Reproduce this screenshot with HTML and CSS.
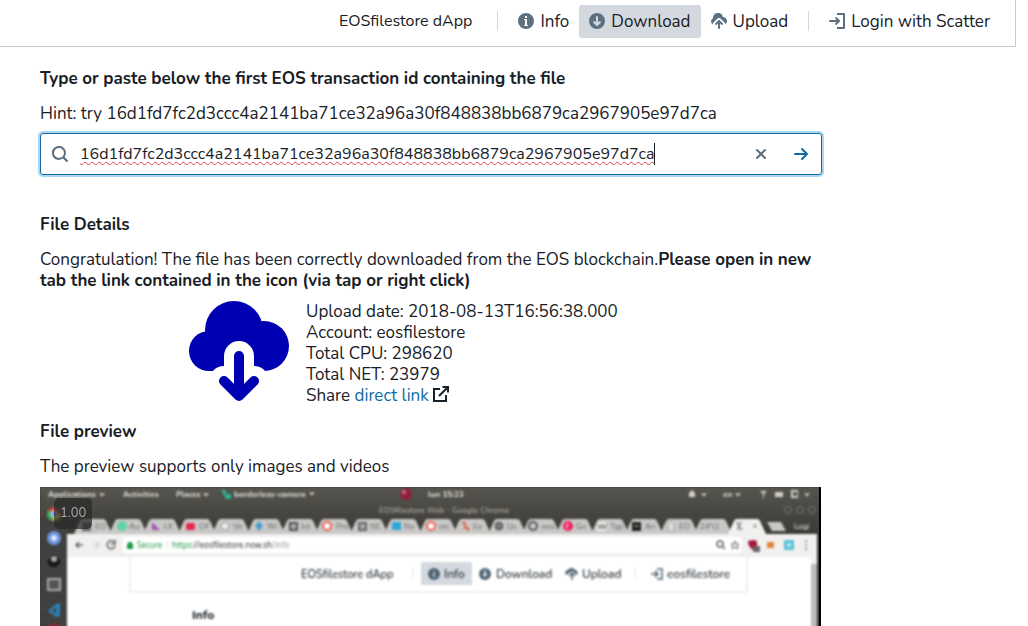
FILE: index.html
```html
<!DOCTYPE html>
<html lang="en">
<head>
    <meta charset="UTF-8">
    <meta name="viewport" content="width=device-width, initial-scale=1.0">
    <title>EOSfilestore Web</title>
    <link rel="stylesheet" href="styles.css">
</head>
<body>
    <header class="navbar">
        <div class="brand">EOSfilestore dApp</div>
        <span class="divider"></span>
        <button type="button" class="nav-button">
            <svg class="icon" viewBox="0 0 16 16"><path fill-rule="evenodd" d="M8 0a8 8 0 1 0 0 16A8 8 0 0 0 8 0zM7 3h2v2H7zM6 6h3v6h1v1H6v-1h1V7H6z"/></svg>
            Info
        </button>
        <button type="button" class="nav-button active">
            <svg class="icon" viewBox="0 0 16 16"><path fill-rule="evenodd" d="M8 0a8 8 0 1 0 0 16A8 8 0 0 0 8 0zM7 4a1 1 0 0 1 2 0v5.600l1.300-1.300a1 1 0 0 1 1.400 1.400l-3 3a1 1 0 0 1-1.400 0l-3-3a1 1 0 0 1 1.400-1.400L7 9.600z"/></svg>
            Download
        </button>
        <button type="button" class="nav-button">
            <svg class="icon" viewBox="0 0 16 16"><path d="M1.600 11.400A3.500 3.500 0 0 1 2 5.300a5 5 0 0 1 9.900-1.300 4 4 0 0 1 2.500 7.200 2.500 2.500 0 0 0-.9-1.600L10 6.100a2.800 2.800 0 0 0-4 0L2.500 9.600a3 3 0 0 0-.9 1.800z"/><path d="M8 7c.3 0 .5.1.7.3l3 3a1 1 0 0 1-1.400 1.400L9 10.400V15a1 1 0 0 1-2 0v-4.600l-1.300 1.300a1 1 0 0 1-1.400-1.400l3-3c.2-.2.4-.3.7-.3z"/></svg>
            Upload
        </button>
        <span class="divider"></span>
        <button type="button" class="nav-button">
            <svg class="icon" viewBox="0 0 16 16"><path d="M8 0h7a1 1 0 0 1 1 1v14a1 1 0 0 1-1 1H8v-2h6V2H8z"/><path d="M11 8a1 1 0 0 1-.3.700l-3 3a1 1 0 0 1-1.400-1.400L7.600 9H1a1 1 0 0 1 0-2h6.600L6.300 5.700a1 1 0 0 1 1.400-1.400l3 3c.2.2.3.4.3.7z"/></svg>
            Login with Scatter
        </button>
    </header>

    <main class="content">
        <form class="search" action="#">
            <h2><label for="txid">Type or paste below the first EOS transaction id containing the file</label></h2>
            <p>Hint: try 16d1fd7fc2d3ccc4a2141ba71ce32a96a30f848838bb6879ca2967905e97d7ca</p>
            <div class="search-box">
                <svg class="icon" viewBox="0 0 16 16"><path fill-rule="evenodd" d="M15.600 13.900l-3-3a7 7 0 1 0-1.700 1.700l3 3a1.200 1.200 0 0 0 1.700-1.700zM7 12A5 5 0 1 1 7 2a5 5 0 0 1 0 10z"/></svg>
                <div class="field">
                    <input type="text" id="txid" name="txid" spellcheck="false" value="16d1fd7fc2d3ccc4a2141ba71ce32a96a30f848838bb6879ca2967905e97d7ca">
                </div>
                <button type="button" class="box-button" aria-label="Clear">
                    <svg class="icon" viewBox="0 0 16 16"><path d="M4 4l8 8m0-8l-8 8" fill="none" stroke="currentColor" stroke-width="2" stroke-linecap="round"/></svg>
                </button>
                <button type="submit" class="box-button go" aria-label="Search">
                    <svg class="icon" viewBox="0 0 16 16"><path d="M2 8h12M9 3l5 5-5 5" fill="none" stroke="currentColor" stroke-width="2" stroke-linecap="round" stroke-linejoin="round"/></svg>
                </button>
            </div>
        </form>

        <section class="details">
            <h2>File Details</h2>
            <p>Congratulation! The file has been correctly downloaded from the EOS blockchain.<b>Please open in new tab the link contained in the icon (via tap or right click)</b></p>
            <div class="file">
                <a class="cloud" href="#" aria-label="Open file">
                    <svg viewBox="0 0 100 100">
                        <g fill="#0000b3">
                            <circle cx="45" cy="29" r="29"/>
                            <circle cx="20" cy="50" r="20"/>
                            <circle cx="75" cy="45" r="25"/>
                            <path d="M20 36h55v34H20z"/>
                        </g>
                        <g fill="none" stroke-linecap="round" stroke-linejoin="round">
                            <path stroke="#fff" stroke-width="30" d="M50 55v38M35 80l15 13 15-13"/>
                            <path stroke="#0000b3" stroke-width="10" d="M50 55v39M35 80l15 15 15-15"/>
                        </g>
                    </svg>
                </a>
                <ul class="meta">
                    <li>Upload date: 2018-08-13T16:56:38.000</li>
                    <li>Account: eosfilestore</li>
                    <li>Total CPU: 298620</li>
                    <li>Total NET: 23979</li>
                    <li class="share">Share <a href="#">direct link</a>
                        <svg class="icon" viewBox="0 0 16 16"><path d="M7 3H1v12h12V9M9.500 1H15v5.500M15 1L6 10" fill="none" stroke="currentColor" stroke-width="2"/></svg>
                    </li>
                </ul>
            </div>
        </section>

        <section class="preview">
            <h2>File preview</h2>
            <p>The preview supports only images and videos</p>
            <div class="video">
                <svg class="frame" viewBox="0 0 781 439">
                    <defs>
                        <linearGradient id="bar" x1="0" y1="0" x2="0" y2="1">
                            <stop offset="0" stop-color="#56554f"/>
                            <stop offset="1" stop-color="#3b3a36"/>
                        </linearGradient>
                        <path id="tab" d="M0 47l6-13q1-2 3-2h20q2 0 3 2l6 13z"/>
                        <path id="caret" d="M-3-1.500h6l-3 3z"/>
                    </defs>
                    <rect width="781" height="439" fill="#3b3b39"/>
                    <g class="soft">
                        <rect width="779" height="47" fill="url(#bar)"/>
                        <rect y="24" width="28" height="415" fill="#40403f"/>
                        <!-- desktop bar -->
                        <g class="desk">
                            <text x="8" y="10">Applications</text><use href="#caret" x="62" y="8"/>
                            <text x="83" y="10">Activities</text>
                            <text x="136" y="10">Places</text><use href="#caret" x="166" y="8"/>
                            <path d="M181 3h5v4h5v5h-5z" fill="#2fae90"/>
                            <text x="194" y="10">borderless-camera</text><use href="#caret" x="272" y="7"/>
                            <circle cx="366" cy="7" r="6" fill="#8f2038"/><circle cx="364" cy="5" r="2" fill="#c8798a"/>
                            <text x="388" y="10">lun 15:23</text>
                            <path d="M649 10V6l3-3 3 3v4z"/><use href="#caret" x="664" y="8"/>
                            <text x="683" y="10">en</text><use href="#caret" x="698" y="8"/>
                            <path d="M720 4h7l-3 3v4h-1V7zM735 5h8v5h-8z"/>
                            <path d="M751 3h7v8h-7zM753 5v4h4V5z" fill-rule="evenodd"/><use href="#caret" x="767" y="8"/>
                        </g>
                        <text class="title" x="339" y="26">EOSfilestore Web - Google Chrome</text>
                        <g fill="none" stroke="#77766f"><circle cx="748" cy="23" r="3.500"/><circle cx="760" cy="23" r="3.500"/><circle cx="772" cy="23" r="3.500"/></g>
                        <!-- browser tabs -->
                        <g fill="#c9c8c6">
                            <use href="#tab" x="34"/><use href="#tab" x="69"/><use href="#tab" x="103"/><use href="#tab" x="138"/>
                            <use href="#tab" x="172"/><use href="#tab" x="207"/><use href="#tab" x="241"/><use href="#tab" x="275"/>
                            <use href="#tab" x="310"/><use href="#tab" x="344"/><use href="#tab" x="379"/><use href="#tab" x="413"/>
                            <use href="#tab" x="448"/><use href="#tab" x="482"/><use href="#tab" x="516"/><use href="#tab" x="551"/>
                            <use href="#tab" x="585"/><use href="#tab" x="620"/><use href="#tab" x="654"/>
                            <use href="#tab" x="688" fill="#f2f1f0"/>
                            <path d="M727 35h14l5 9h-14z"/>
                        </g>
                        <rect x="42" y="35" width="9" height="9" fill="#666"/>
                        <circle cx="82" cy="39" r="5" fill="#5fd3a5"/>
                        <path d="M112 35l8 8h-8z" fill="#a455b5"/>
                        <rect x="146" y="36" width="9" height="7" rx="2" fill="#e8254c"/>
                        <circle cx="185" cy="39" r="4" fill="#e8e8e8" stroke="#999"/>
                        <path d="M219 34l4 5-4 5-4-5z" fill="#4a9cc9"/>
                        <rect x="250" y="36" width="7" height="7" fill="#aaa" stroke="#555" stroke-width="2"/>
                        <circle cx="287" cy="39" r="4" fill="#fff" stroke="#f0604c" stroke-width="2"/>
                        <rect x="319" y="36" width="7" height="7" fill="#aaa" stroke="#666" stroke-width="2"/>
                        <rect x="352" y="35" width="9" height="8" fill="#2fa8d6"/>
                        <circle cx="391" cy="39" r="4" fill="#fff" stroke="#f0604c" stroke-width="2"/>
                        <path d="M422 36h3v5h3v3" fill="none" stroke="#d96b4f" stroke-width="2"/>
                        <circle cx="459" cy="39" r="4" fill="#777" stroke="#555"/>
                        <circle cx="493" cy="39" r="4" fill="none" stroke="#555" stroke-width="2"/>
                        <circle cx="528" cy="39" r="5" fill="#ed1f5e"/><path d="M527 42v-5h2" stroke="#fff" fill="none"/>
                        <rect x="557" y="35" width="9" height="9" fill="#eee"/><path d="M558 37l2 5 2-5 2 5 2-5" stroke="#555" fill="none"/>
                        <rect x="592" y="35" width="9" height="9" fill="#222"/><path d="M594 39h5" stroke="#bbb"/>
                        <path d="M628 35h4l2 2v7h-6z" fill="#ddd" stroke="#aaa"/>
                        <path d="M696 36h6M697 39h4M697 42h6M699 36v6" stroke="#666" fill="none"/>
                        <path d="M713 37l4 4m0-4l-4 4" stroke="#888"/>
                        <g class="tab-text">
                            <text x="55" y="42">EO</text><text x="89" y="42">Au</text><text x="124" y="42">LK</text><text x="159" y="42">OF</text>
                            <text x="193" y="42">Ve</text><text x="227" y="42">Wi</text><text x="261" y="42">Int</text><text x="296" y="42">Pro</text>
                            <text x="330" y="42">NE</text><text x="364" y="42">No</text><text x="399" y="42">rec</text><text x="433" y="42">Eo</text>
                            <text x="467" y="42">Us</text><text x="502" y="42">eos</text><text x="536" y="42">Go</text><text x="570" y="42">Typ</text>
                            <text x="605" y="42">An</text><text x="639" y="42">EO</text><text x="660" y="42">24°(1</text>
                        </g>
                        <text class="user" x="754" y="42">Luigi</text>
                        <!-- address bar -->
                        <rect x="27" y="47" width="750" height="23" fill="#f1f0ef"/>
                        <rect x="83" y="50" width="619" height="16" rx="2" fill="#fff"/>
                        <g fill="none" stroke="#666" stroke-width="1.500">
                            <path d="M43 58h-7m3-3l-3 3 3 3"/>
                            <path d="M53 58h6m-3-3l3 3-3 3" stroke="#d2d2d2"/>
                            <path d="M74 55a4 4 0 1 0 1 4M75 53v4h-4"/>
                            <circle cx="680" cy="57" r="3"/><path d="M682 59l3 3"/>
                            <path d="M695 54l1 3h3l-2 2 1 3-3-2-3 2 1-3-2-2h3z" stroke-width="1"/>
                        </g>
                        <path d="M87 57h6v5h-6zM88 57v-2h4v2z" fill="#239a4b"/>
                        <text class="url" x="97" y="61"><tspan fill="#1d9a48">Secure</tspan></text>
                        <path d="M127 54v8" stroke="#ddd"/>
                        <text class="url" x="132" y="61"><tspan fill="#1d9a48">https</tspan>://eosfilestore.now.sh<tspan fill="#999">/info</tspan></text>
                        <path d="M708 54l5-1 4 1v5l-4 4q-5-3-5-9z" fill="#a3173b"/><rect x="713" y="59" width="7" height="6" fill="#666"/>
                        <rect x="727" y="55" width="7" height="6" fill="#e2853c"/>
                        <rect x="744" y="53" width="10" height="10" rx="1" fill="#59c2d8"/><circle cx="749" cy="58" r="2" fill="#c8eef5"/>
                        <g fill="#777"><circle cx="766" cy="54" r="1"/><circle cx="766" cy="58" r="1"/><circle cx="766" cy="62" r="1"/></g>
                        <!-- page in the browser -->
                        <rect x="27" y="70" width="744" height="369" fill="#fff"/>
                        <rect x="771" y="70" width="6" height="369" fill="#f0f0f0"/>
                        <rect x="771" y="77" width="6" height="362" fill="#bbb"/>
                        <path d="M90 70v35h617V70" fill="none" stroke="#e0e0e0"/>
                        <rect x="381" y="75" width="51" height="23" rx="1" fill="#d3d9df"/>
                        <path d="M373 81v11M595 81v11" stroke="#e2e4e6"/>
                        <g class="page-text">
                            <text class="page-brand" x="261" y="91">EOSfilestore dApp</text>
                            <text x="404" y="91">Info</text>
                            <text x="456" y="91">Download</text>
                            <text x="542" y="91">Upload</text>
                            <text x="627" y="91">eosfilestore</text>
                            <text class="page-heading" x="152" y="132">Info</text>
                        </g>
                        <g fill="#4d6373">
                            <circle cx="394" cy="87" r="6"/><circle cx="445" cy="87" r="6"/>
                            <path d="M526 88a3 3 0 0 1 2-5 4 4 0 0 1 7 0 3 3 0 0 1 2 5l-5-4z"/>
                        </g>
                        <path d="M394 84v1M394 86v4M445 83v6m-2-2l2 2 2-2" stroke="#e5ebf0" stroke-width="1.500" fill="none"/>
                        <path d="M532 93v-7m-3 3l3-3 3 3M611 87h7m-3-3l3 3-3 3M617 82h5v10h-5" stroke="#4d6373" stroke-width="1.500" fill="none"/>
                        <!-- launcher -->
                        <circle cx="14" cy="27" r="7" fill="#d9473c"/><path d="M14 27l-6-4a7 7 0 0 0 5 11z" fill="#3ea55d"/><path d="M14 27h7a7 7 0 0 1-8 7z" fill="#e8c33b"/><circle cx="14" cy="27" r="3" fill="#5b8def" stroke="#fff"/>
                        <circle cx="14" cy="51" r="7" fill="#6f93dc"/><circle cx="14" cy="51" r="3" fill="#dce7fb"/>
                        <path d="M7 75q3-4 7-8 4 4 7 8l-5 5h-5z" fill="#151515"/><circle cx="14" cy="72" r="3" fill="#aaa"/>
                        <rect x="8" y="92" width="12" height="11" fill="#555" stroke="#aaa" stroke-width="2"/>
                        <path d="M20 116v13l-4 1-8-6 8-7zM16 120l-4 4 4 3z" fill="#2d81bd" fill-rule="evenodd"/>
                        <rect x="7" y="137" width="14" height="14" rx="2" fill="#7c2a34"/>
                        <path d="M2 24v6M2 98h2M2 122h2" stroke="#b3412d"/>
                    </g>
                    <rect x="779" width="2" height="439" fill="#000"/>
                </svg>
                <span class="rate">1.00</span>
            </div>
        </section>
    </main>
</body>
</html>
```
FILE: styles.css
```css
* {
    box-sizing: border-box;
}
body {
    margin: 0;
    padding-right: 12px;
    background-color: #fff;
    color: #182026;
    font-family: 'Nunito', 'Noto Sans', sans-serif;
    font-size: 17px;
    line-height: 21px;
}
h2, p, ul {
    margin: 0;
    padding: 0;
}
h2 {
    font-size: 17px;
    font-weight: 700;
    line-height: 21px;
    margin-bottom: 14px;
}
a {
    color: #106ba3;
    text-decoration: none;
}
button, input {
    font-family: inherit;
    color: inherit;
}
.icon {
    width: 16px;
    height: 16px;
    flex: none;
    fill: currentColor;
}

/* Top bar */
.navbar {
    display: flex;
    align-items: center;
    justify-content: flex-end;
    height: 47px;
    padding: 0 15px 4px 0;
    border-right: 1px solid #ccc;
    border-bottom: 1px solid #c4c6c8;
}
.brand {
    margin-right: 15px;
    font-size: 16px;
}
.divider {
    width: 1px;
    height: 20px;
    margin: 0 10px;
    background-color: #d5d8da;
}
.nav-button {
    display: flex;
    align-items: center;
    gap: 6px;
    height: 33px;
    padding: 0 10px;
    border: 0;
    border-radius: 3px;
    background: none;
    font-size: 17px;
    cursor: pointer;
}
.nav-button .icon {
    color: #5c7080;
}
.nav-button:hover, .nav-button.active {
    background-color: #d3d9de;
}

/* Content */
.content {
    max-width: 822px;
    padding: 21px 0 0 40px;
}
.search {
    margin-bottom: 39px;
}
.search p {
    margin-bottom: 9px;
}
.search-box {
    display: flex;
    align-items: center;
    height: 42px;
    padding-left: 11px;
    border: 1px solid #106ba3;
    border-radius: 3px;
    box-shadow: 0 0 0 2px #a9d6f2;
}
.search-box .icon {
    color: #5c7080;
}
.field {
    flex: 1;
    display: flex;
    padding-left: 12px;
}
.field input {
    field-sizing: content;
    height: 22px;
    padding: 0;
    border: 0;
    border-right: 1px solid #182026;
    outline: none;
    font-size: 16px;
    line-height: 22px;
    text-decoration: underline wavy #e0424a 1px;
    text-underline-offset: 2px;
}
.box-button {
    display: flex;
    justify-content: center;
    width: 40px;
    padding: 0;
    border: 0;
    background: none;
    cursor: pointer;
}
.search-box .go .icon {
    color: #106ba3;
}
.file {
    display: flex;
    gap: 17px;
    margin: 10px 0 15px;
    padding-left: 149px;
}
.cloud svg {
    display: block;
    width: 100px;
    height: 100px;
}
.meta {
    list-style: none;
}
.share .icon {
    vertical-align: -1px;
}

/* Preview */
.preview p {
    margin-bottom: 10px;
}
.video {
    position: relative;
    margin-right: 1px;
}
.frame {
    display: block;
    width: 100%;
}
.soft {
    filter: blur(0.8px);
}
.desk {
    fill: #d2d0c9;
    font-size: 8px;
    font-weight: 800;
}
.title {
    fill: #a5a39c;
    font-size: 8px;
    font-weight: 600;
}
.tab-text {
    fill: #666;
    font-size: 8px;
}
.user {
    fill: #ddd;
    font-size: 7px;
    font-weight: 600;
}
.url {
    fill: #333;
    font-family: 'Noto Sans', sans-serif;
    font-size: 8px;
}
.page-text {
    fill: #20282e;
    font-size: 12px;
    font-weight: 500;
}
.page-brand {
    font-size: 11px;
}
.page-heading {
    font-weight: 800;
}
.rate {
    position: absolute;
    top: 11px;
    left: 14px;
    padding: 5px 6px;
    border-radius: 5px;
    background-color: rgba(40, 40, 40, 0.7);
    color: #aaa;
    font-size: 13px;
}
```
